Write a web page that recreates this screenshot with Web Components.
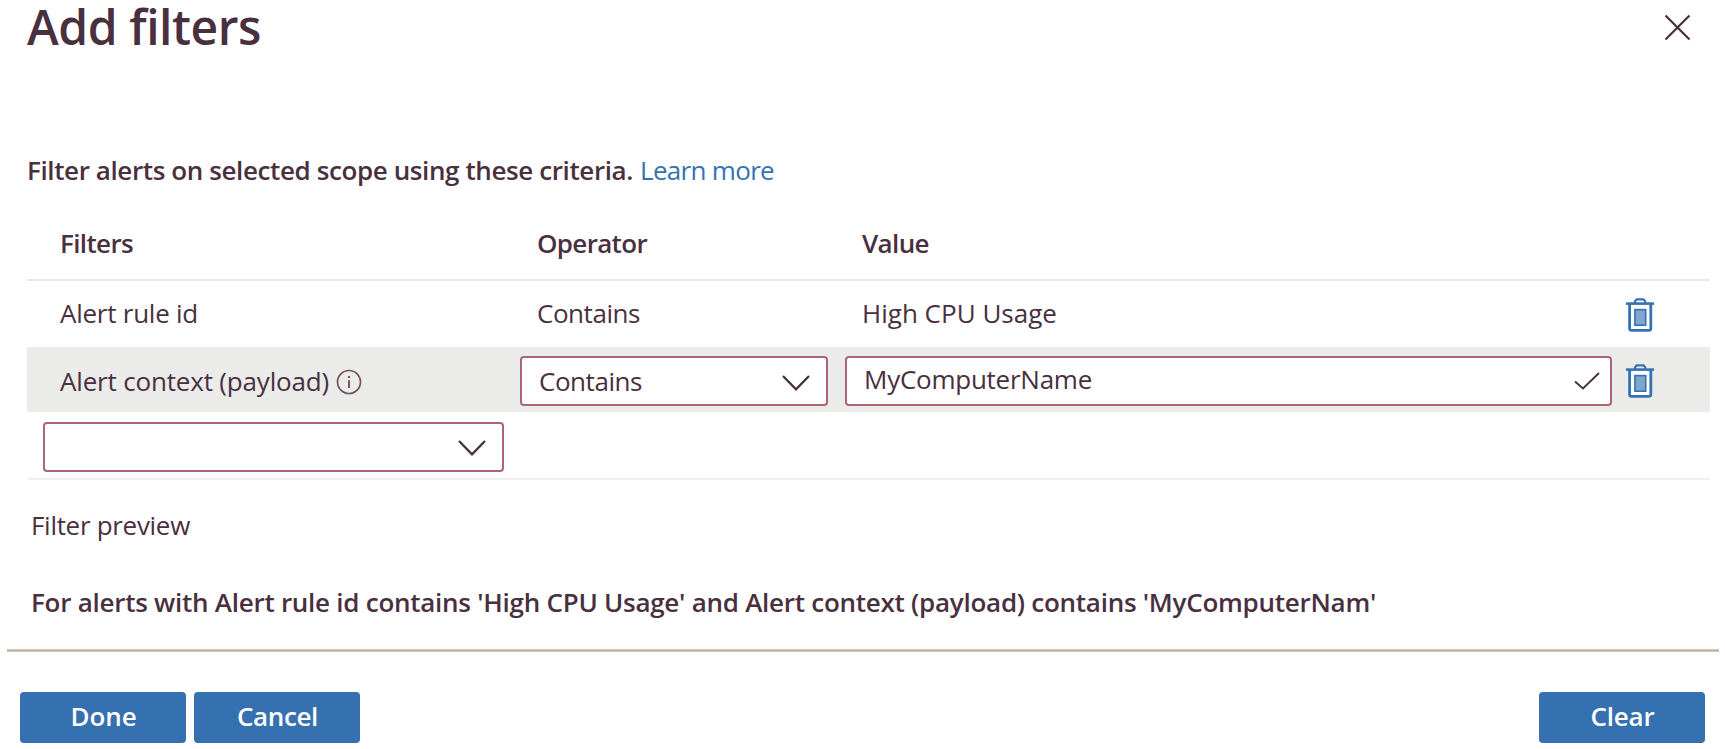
<!DOCTYPE html>
<html lang="en"><head><meta charset="utf-8"><title>Add filters</title>
<style>
html,body{margin:0;background:#fff}
body{width:1725px;height:749px}
</style></head><body>
<filter-panel></filter-panel>
<script>
const make=(tag,html,init)=>customElements.define(tag,class extends HTMLElement{
  connectedCallback(){
    if(!this.shadowRoot){this.attachShadow({mode:'open'}).innerHTML=html;}
    if(init)init(this,this.shadowRoot);
  }
});

/* Text label whose tracking is adjusted so its advance equals the "w" attribute. */
make('fit-text',`<style>:host{display:inline-block;white-space:pre}span{display:inline-block}</style><span><slot></slot></span>`,(h,r)=>{
  const s=r.querySelector('span'),w=+h.getAttribute('w');
  if(w){s.style.letterSpacing=(w-s.getBoundingClientRect().width)/h.textContent.length+'px';h.style.width=w+'px';}
});

const icons={
  close:[27,27,'<path d="M1.5 1.5 25.5 25.5M25.5 1.5 1.5 25.5" stroke-width="2.2"/>'],
  chevron:[28,16,'<path d="M1 1 14 14.3 27 1" stroke-width="2.3"/>'],
  check:[26,18,'<path d="M1 9.5 9 16.5 25 1" stroke-width="1.9"/>'],
  info:[26,26,'<circle cx="13" cy="13" r="11.5" stroke-width="1.7"/><path d="M13 11.3V19M13 7V9" stroke-width="1.9"/>'],
  trash:[28,34,'<path d="M3.6 6V30.5Q3.6 32.4 5.6 32.4H22.6Q24.8 32.4 24.8 30.5V6" fill="#fff" stroke-width="2.8"/><path d="M0 5.6H28" stroke-width="2.6"/><path d="M9 5V3.4L10.6 1.4H17.6L19.2 3.4V5" stroke-width="2.2"/><rect x="8.9" y="11.6" width="10.8" height="15.6" fill="#7fa6cd" stroke-width="1.6"/>']
};
make('ui-icon',`<style>:host{display:block;flex:none;color:#49303f}svg{display:block;fill:none;stroke:currentColor;stroke-width:2.4}:host([name=trash]){color:#3672b3}:host([name=info]){color:#76505f}</style><div></div>`,(h,r)=>{
  const [w,ht,p]=icons[h.getAttribute('name')];
  r.querySelector('div').innerHTML=`<svg width="${w}" height="${ht}" viewBox="0 0 ${w} ${ht}">${p}</svg>`;
});

make('ui-field',`<style>:host{display:flex;box-sizing:border-box;height:50px;border:2px solid #ab6479;border-radius:4px;background:#fff;align-items:center;justify-content:space-between}</style><slot></slot>`);

make('ui-button',`<style>:host{display:block}button{display:flex;align-items:center;justify-content:center;width:166px;height:51px;border:0;border-radius:4px;background:#3570b1;color:#fff;font:600 26px/36px "Open Sans","Noto Sans",sans-serif;padding:0 0 4px 1px}</style><button><slot></slot></button>`);

make('filter-row',`<style>:host{display:grid;box-sizing:border-box;grid-template-columns:477px 325px 782px 1fr;align-items:center;padding-left:33px}
::slotted(*){min-width:0}</style><slot></slot>`);

make('filter-panel',`<style>
:host{display:flex;flex-direction:column;box-sizing:border-box;width:1725px;height:749px;background:#fff;color:#49303f;font:400 26px/36px "Open Sans","Noto Sans",sans-serif}
header{display:flex;justify-content:space-between;align-items:flex-start;height:152px;padding:0 34px 0 27px;box-sizing:border-box}
h1{margin:2px 0 0;font-size:48px;font-weight:600;line-height:50px}
h1 fit-text{display:block}
header ui-icon{margin-top:14px}
.intro{display:flex;height:36px;padding-left:27px}
.intro a{color:#3672b3;margin-left:7px}
.b{font-weight:600}
main{margin:8px 15px 0 27px}
.head{height:85px;padding-top:11px;border-bottom:2px solid #e9e8e8;font-weight:600}
.one{height:66px}.one fit-text{margin-top:-3px}
.two{height:65px;background:#ebebea}
.three{height:68px;padding:3px 0 0 16px;border-bottom:2px solid #f1f0ef;display:flex;align-items:center;box-sizing:border-box}
.three ui-field{width:461px;padding-right:16px}
.name{display:flex;align-items:center;gap:9px;margin-top:3px}
.name ui-icon{margin-top:1px}
.sel{width:308px;margin-left:-17px;padding:0 16px 0 17px}
.val{width:767px;margin-left:-17px;padding:0 10px 3px 17px}
.sel,.val{margin-top:3px}
.sel fit-text{margin-top:-1px}
.val fit-text{margin-top:-1px}
.sel ui-icon,.three ui-icon{margin-top:3px}
.preview{margin:27px 0 0 31px;height:77px}
.summary{padding-left:31px;height:36px}
.rule{margin:29px 6px 0 7px;height:1px;background:#a8b8c4;border:solid #dfc3a6;border-width:1px 0}
footer{display:flex;gap:8px;padding:40px 20px 0}
footer ui-button:last-child{margin-left:auto}
</style>
<header><h1><fit-text w="234">Add filters</fit-text></h1><ui-icon name="close"></ui-icon></header>
<div class="intro"><fit-text class="b" w="606">Filter alerts on selected scope using these criteria.</fit-text><a><fit-text w="134">Learn more</fit-text></a></div>
<main>
<filter-row class="head"><fit-text w="73">Filters</fit-text><fit-text w="110">Operator</fit-text><fit-text w="67">Value</fit-text></filter-row>
<filter-row class="one"><fit-text w="138">Alert rule id</fit-text><fit-text w="103">Contains</fit-text><fit-text w="195">High CPU Usage</fit-text><ui-icon name="trash" style="margin-left:-18px;margin-top:2px"></ui-icon></filter-row>
<filter-row class="two"><div class="name"><fit-text w="269">Alert context (payload)</fit-text><ui-icon name="info" style="margin-left:-2px"></ui-icon></div>
<ui-field class="sel"><fit-text w="103">Contains</fit-text><ui-icon name="chevron"></ui-icon></ui-field>
<ui-field class="val"><fit-text w="228">MyComputerName</fit-text><ui-icon name="check" style="margin-top:3px"></ui-icon></ui-field>
<ui-icon name="trash" style="margin-left:-18px;margin-top:3px"></ui-icon></filter-row>
<div class="three"><ui-field><span></span><ui-icon name="chevron"></ui-icon></ui-field></div>
</main>
<div class="preview"><fit-text w="159">Filter preview</fit-text></div>
<div class="summary"><fit-text class="b" w="1345">For alerts with Alert rule id contains 'High CPU Usage' and Alert context (payload) contains 'MyComputerNam'</fit-text></div>
<div class="rule"></div>
<footer><ui-button><fit-text w="66">Done</fit-text></ui-button><ui-button><fit-text w="81">Cancel</fit-text></ui-button><ui-button><fit-text w="64">Clear</fit-text></ui-button></footer>`);
</script></body></html>
